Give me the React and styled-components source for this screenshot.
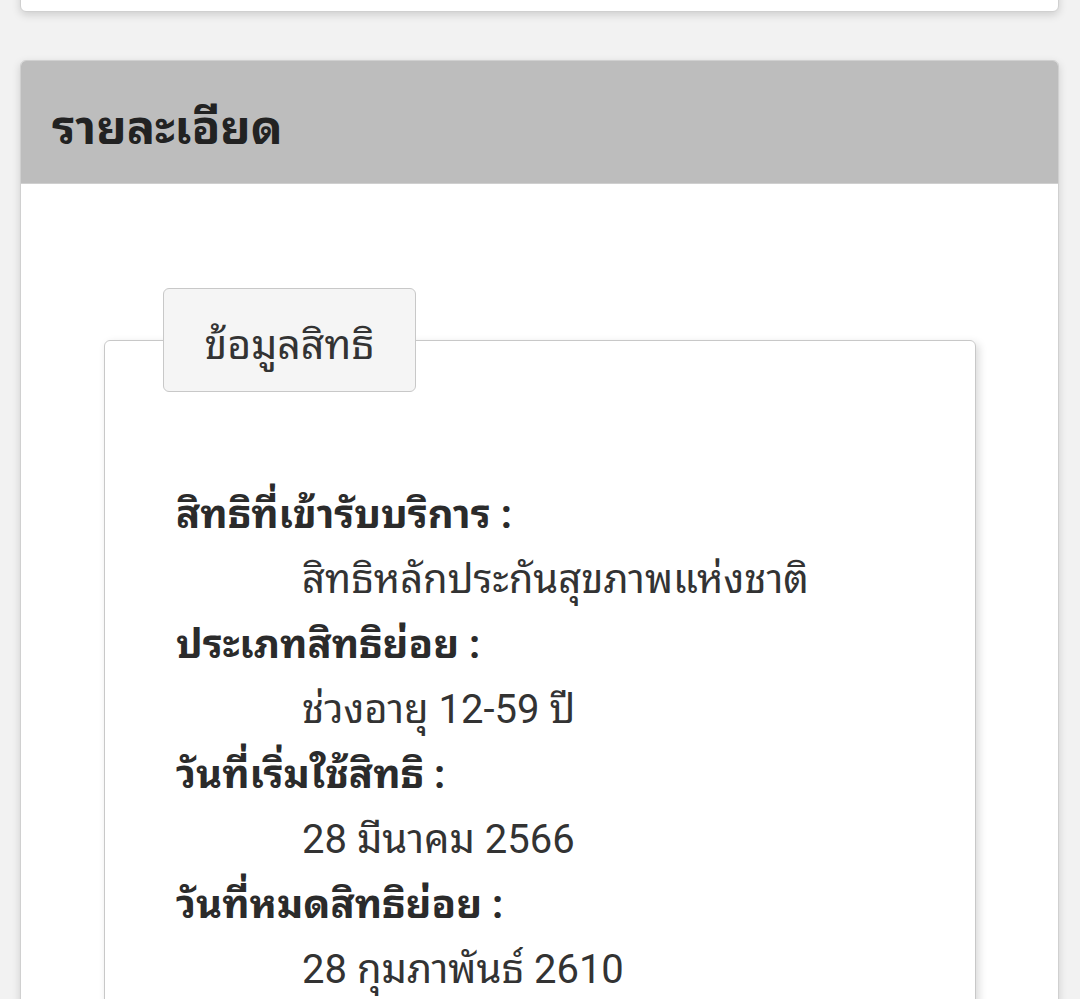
import React from 'react';
import styled, { createGlobalStyle } from 'styled-components';

const GlobalStyle = createGlobalStyle`
  body {
    margin: 0;
    background: #f2f2f2;
    font-family: Roboto, "Noto Sans Thai Looped", Loma, Garuda, Waree, Kinnari, "Noto Sans Thai", sans-serif;
    color: #333;
  }
`;

const Page = styled.div`
  padding: 0 21px 0 20px;
  height: 999px;
  overflow: hidden;
`;

const TopCard = styled.div`
  height: 30px;
  margin-top: -20px;
  background: #fff;
  border: 1px solid #d0d0d0;
  border-radius: 6px;
  box-shadow: 0 3px 8px rgba(0, 0, 0, 0.15);
`;

const Card = styled.section`
  margin-top: 48px;
  background: #fff;
  border: 1px solid #d0d0d0;
  border-radius: 6px;
  box-shadow: 0 3px 8px rgba(0, 0, 0, 0.15);
  overflow: hidden;
`;

const CardHeader = styled.header`
  height: 122px;
  display: flex;
  align-items: center;
  padding-left: 31px;
  background: #bdbdbd;
  border-bottom: 1px solid #cfcfcf;
`;

const Title = styled.h2`
  margin: 0;
  font-size: 47px;
  font-weight: 700;
  color: #222;
`;

const CardBody = styled.div`
  padding: 104px 82px 40px 83px;
`;

const Group = styled.fieldset`
  margin: 0;
  padding: 0 0 40px 58px;
  border: 1px solid #c8c8c8;
  border-radius: 6px;
  box-shadow: 3px 3px 8px rgba(0, 0, 0, 0.15);
`;

const Legend = styled.legend`
  box-sizing: border-box;
  width: 253px;
  height: 104px;
  padding: 0;
  display: flex;
  align-items: center;
  justify-content: center;
  background: #f5f5f5;
  border: 1px solid #c8c8c8;
  border-radius: 6px;
  font-size: 41px;
  color: #333;
`;

const InfoList = styled.dl`
  margin: 90px 0 0;
  padding-left: 13px;
  font-size: 40px;
  line-height: 65px;
`;

const Label = styled.dt`
  font-weight: 700;
  color: #2b2b2b;
`;

const Value = styled.dd`
  margin-left: 126px;
  color: #333;
`;

const rows = [
  ['สิทธิที่เข้ารับบริการ :', 'สิทธิหลักประกันสุขภาพแห่งชาติ'],
  ['ประเภทสิทธิย่อย :', 'ช่วงอายุ 12-59 ปี'],
  ['วันที่เริ่มใช้สิทธิ :', '28 มีนาคม 2566'],
  ['วันที่หมดสิทธิย่อย :', '28 กุมภาพันธ์ 2610'],
];

const App = () => (
  <Page>
    <GlobalStyle />
    <TopCard />
    <Card>
      <CardHeader>
        <Title>รายละเอียด</Title>
      </CardHeader>
      <CardBody>
        <Group>
          <Legend>ข้อมูลสิทธิ</Legend>
          <InfoList>
            {rows.map(([label, value]) => (
              <React.Fragment key={label}>
                <Label>{label}</Label>
                <Value>{value}</Value>
              </React.Fragment>
            ))}
          </InfoList>
        </Group>
      </CardBody>
    </Card>
  </Page>
);

export default App;
